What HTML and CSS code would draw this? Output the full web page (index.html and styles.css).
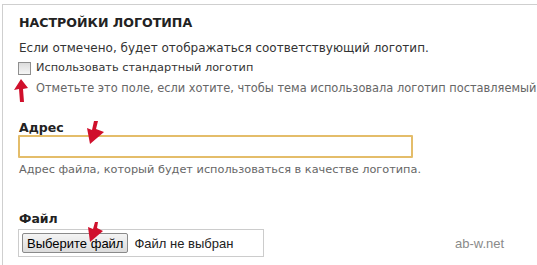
FILE: index.html
```
<!DOCTYPE html>
<html lang="ru">
<head>
<meta charset="utf-8">
<link rel="stylesheet" href="styles.css">
</head>
<body>
<div class="frame">
  <h2 class="title">НАСТРОЙКИ ЛОГОТИПА</h2>
  <p class="lead">Если отмечено, будет отображаться соответствующий логотип.</p>
  <div class="check-row"><span class="checkbox"></span><span class="check-label">Использовать стандартный логотип</span></div>
  <p class="desc indent">Отметьте это поле, если хотите, чтобы тема использовала логотип поставляемый</p>
  <div class="field-label first">Адрес</div>
  <div class="text-input"></div>
  <p class="desc">Адрес файла, который будет использоваться в качестве логотипа.</p>
  <div class="field-label second">Файл</div>
  <div class="file-row">
    <div class="file-box"><span class="btn">Выберите файл</span><span class="nofile">Файл не выбран</span></div>
    <span class="watermark">ab-w.net</span>
  </div>
</div>
<svg class="arrow arrow-up" width="20" height="26" viewBox="0 0 20 26"><path d="M8 1 L1 12 L6 11 L7 24 L11 24 L10 11 L15 10 Z" fill="#d0102c"/></svg>
<svg class="arrow arrow-addr" width="22" height="26" viewBox="0 0 22 26"><path d="M9 1 L13 1 L11 9 L19 12 L5 24 L2 8 L7 10 Z" fill="#d0102c"/></svg>
<svg class="arrow arrow-file" width="20" height="24" viewBox="0 0 20 24"><path d="M9 1 L12 1 L11 7 L17 10 L4 21 L2 6 L7 8 Z" fill="#d0102c"/></svg>
</body>
</html>
```
FILE: styles.css
```
html, body {
  margin: 0;
  padding: 0;
  background: #fff;
}
body {
  width: 537px;
  height: 265px;
  overflow: hidden;
  position: relative;
  font-family: "DejaVu Sans", Verdana, sans-serif;
  color: #333;
}
.frame {
  margin: 4px 0 0 2px;
  border-top: 1px solid #cfcfcf;
  border-left: 1px solid #cfcfcf;
  height: 270px;
  padding: 0 0 0 16px;
  box-sizing: border-box;
}
.title {
  margin: 0;
  padding-top: 10px;
  font-size: 12.6px;
  line-height: 16px;
  font-weight: bold;
  color: #222;
}
.lead {
  margin: 9px 0 0 0;
  font-size: 12px;
  line-height: 16px;
  color: #333;
}
.check-row {
  display: flex;
  align-items: center;
  margin-top: 5px;
  height: 14px;
}
.checkbox {
  width: 11px;
  height: 11px;
  border: 1px solid #8f8f8f;
  background: linear-gradient(#dcdcdc, #f6f6f6);
  box-sizing: content-box;
  margin-left: -1px;
}
.check-label {
  margin-left: 5px;
  font-size: 11.3px;
  line-height: 14px;
  color: #333;
}
.desc {
  margin: 0;
  font-size: 11.3px;
  line-height: 14px;
  color: #666;
  white-space: nowrap;
}
.indent {
  margin-top: 6px;
  padding-left: 17px;
  font-size: 11.4px;
}
.field-label {
  font-size: 12.5px;
  line-height: 14px;
  font-weight: bold;
  color: #222;
}
.field-label.first {
  margin-top: 26px;
}
.field-label.second {
  margin-top: 35px;
}
.text-input {
  width: 391px;
  height: 19px;
  border: 2px solid #e4bd6a;
  border-radius: 1px;
  margin-left: -1px;
  margin-top: 0;
}
.text-input + .desc {
  margin-top: 5px;
}
.file-row {
  display: flex;
  align-items: center;
  margin-top: 3px;
}
.file-box {
  width: 241px;
  height: 26px;
  border: 1px solid #ccc;
  margin-left: -1px;
  display: flex;
  align-items: center;
  padding-left: 3px;
  box-sizing: content-box;
}
.btn {
  font-family: "Liberation Sans", Arial, sans-serif;
  font-size: 13px;
  line-height: 15px;
  color: #000;
  border: 1px solid #8a8a8a;
  border-radius: 2px;
  background: linear-gradient(#f4f4f4, #dcdcdc);
  padding: 2px 4px 1px 4px;
}
.nofile {
  font-family: "Liberation Sans", Arial, sans-serif;
  font-size: 13px;
  color: #222;
  margin-left: 6px;
}
.watermark {
  font-family: "Liberation Sans", Arial, sans-serif;
  font-size: 13px;
  color: #8a8a8a;
  margin-left: 191px;
  margin-top: 1px;
}
.arrow {
  position: absolute;
}
.arrow-up {
  left: 13px;
  top: 78px;
}
.arrow-addr {
  left: 85px;
  top: 120px;
}
.arrow-file {
  left: 86px;
  top: 221px;
}
```
